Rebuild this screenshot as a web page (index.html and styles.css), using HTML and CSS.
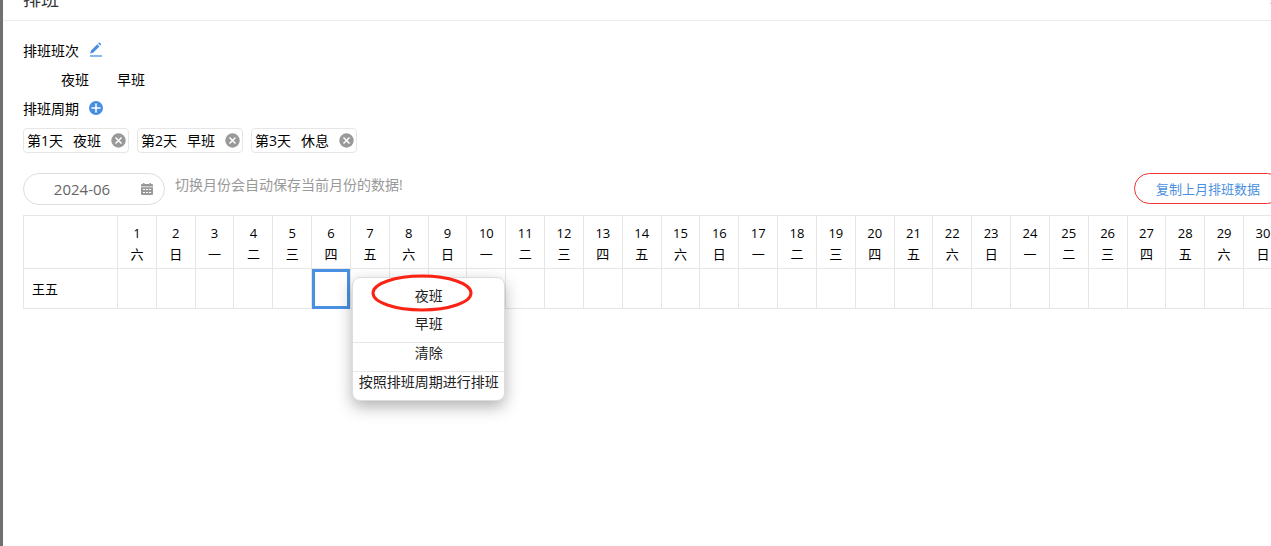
FILE: index.html
```
<!DOCTYPE html>
<html lang="zh-CN">
<head>
	<meta charset="UTF-8">
	<meta name="viewport" content="width=device-width, initial-scale=1.0">
	<title>排班</title>
	<link rel="stylesheet" href="styles.css">
</head>
<body>
<div class="drawer">
	<header class="drawer-header">
		<h1>排班</h1>
		<button class="close" type="button" aria-label="关闭">
			<svg width="14" height="14" viewBox="0 0 14 14"><path d="M2 2l10 10M12 2L2 12" stroke="#888" stroke-width="2"/></svg>
		</button>
	</header>
	<main class="content">
		<div class="line">
			<span>排班班次</span>
			<button class="icon-btn" type="button" aria-label="编辑班次">
				<svg width="14" height="16" viewBox="0 0 14 16"><path d="M1.200 11.500l.8-3 6.300-6.300 2.200 2.200-6.300 6.300zM9.100 1.400l.6-.6q.6-.5 1.200 0l1 1q.5.600 0 1.200l-.6.600z" fill="#4a90e2"/><path d="M1 14h12" stroke="#4a90e2" stroke-width="1.300"/></svg>
			</button>
		</div>
		<div class="line shifts">
			<span>夜班</span>
			<span>早班</span>
		</div>
		<div class="line">
			<span>排班周期</span>
			<button class="icon-btn" type="button" aria-label="添加周期">
				<svg width="14" height="14" viewBox="0 0 14 14"><circle cx="7" cy="7" r="7" fill="#4a90e2"/><path d="M7 2.500v9M2.500 7h9" stroke="#fff" stroke-width="1.500"/></svg>
			</button>
		</div>
		<div class="tags" id="tags"></div>
		<div class="toolbar">
			<div class="month">
				<input type="text" value="2024-06" aria-label="月份">
				<svg width="14" height="14" viewBox="0 0 14 14"><path d="M1 4.500V3q0-1 1-1h10q1 0 1 1v1.500zM3 1h1.500v2H3zM9.500 1H11v2H9.500zM1 5.200h12V12q0 1-1 1H2q-1 0-1-1z" fill="#999"/><path d="M3 7.500h2M6 7.500h2M9 7.500h2M3 10.500h2M6 10.500h2M9 10.500h2" stroke="#fff" stroke-width="1"/></svg>
			</div>
			<span class="hint">切换月份会自动保存当前月份的数据!</span>
			<button class="copy" type="button">复制上月排班数据</button>
		</div>
		<table class="schedule">
			<thead><tr id="days"><th class="name"></th></tr></thead>
			<tbody><tr id="staff"><td class="name">王五</td></tr></tbody>
		</table>
	</main>
</div>

<template id="menu">
	<div class="menu">
		<button type="button">夜班</button>
		<button type="button">早班</button>
		<button type="button" class="split">清除</button>
		<button type="button" class="split">按照排班周期进行排班</button>
		<svg class="mark" width="102" height="38" viewBox="0 0 102 38"><ellipse cx="51" cy="19" rx="49" ry="17" fill="none" stroke="#fa2314" stroke-width="3"/></svg>
	</div>
</template>
<script src="script.js"></script>
</body>
</html>
```
FILE: styles.css
```
* {
  box-sizing: border-box;
}
body {
  margin: 0;
  min-height: 100vh;
  font-family: "Open Sans", "Noto Sans CJK SC", sans-serif;
  font-size: 14px;
  color: #000;
  background-color: #707070;
  overflow-x: hidden;
}
button {
  font-family: inherit;
  padding: 0;
  border: none;
  background: none;
  color: inherit;
  cursor: pointer;
}
svg {
  display: block;
}
.drawer {
  min-height: 100vh;
  margin-left: 3px;
  background-color: #fff;
  overflow: hidden;
}
.drawer-header {
  display: flex;
  justify-content: space-between;
  align-items: flex-end;
  height: 21px;
  margin-right: -12px;
  padding-left: 20px;
  border-bottom: 1px solid #ebebeb;
  overflow: hidden;
}
.drawer-header h1 {
  margin: 0;
  padding-bottom: 9px;
  font-size: 18px;
  font-weight: normal;
  line-height: 24px;
  color: #333;
}
.close {
  padding-bottom: 14px;
}
.content {
  margin-right: -12px;
  padding: 14px 0 20px 20px;
}
.line {
  display: flex;
  align-items: center;
  gap: 10px;
  height: 29px;
}
.shifts {
  gap: 28px;
  padding-left: 38px;
}
.tags {
  display: flex;
  gap: 8px;
  margin-top: 6px;
}
.tag {
  display: flex;
  align-items: center;
  gap: 10px;
  height: 25px;
  padding: 0 2px 0 3px;
  border: 1px solid #e6e6e6;
  border-radius: 4px;
  line-height: 21px;
}
.toolbar {
  display: flex;
  align-items: flex-start;
  gap: 10px;
  margin-top: 20px;
}
.month {
  display: flex;
  align-items: center;
  width: 142px;
  height: 32px;
  padding-right: 10px;
  border: 1px solid #ddd;
  border-radius: 16px;
}
.month input {
  flex: 1;
  min-width: 0;
  padding: 0;
  border: none;
  outline: none;
  background: none;
  font-family: inherit;
  font-size: 15px;
  text-align: center;
  color: #666;
}
.hint {
  line-height: 24px;
  color: #999;
}
.copy {
  height: 31px;
  margin-left: auto;
  padding: 0 22px 0 21px;
  border: 1px solid #f03232;
  border-radius: 16px;
  font-size: 13px;
  color: #4a90e2;
}
.schedule {
  width: 100%;
  margin-top: 10px;
  table-layout: fixed;
  border-collapse: collapse;
  font-size: 13px;
}
.schedule th,
.schedule td {
  padding: 0;
  border: 1px solid #e6e6e6;
}
.schedule th {
  height: 53px;
  padding-top: 3px;
  font-weight: normal;
  line-height: 21px;
}
.schedule td {
  position: relative;
  height: 40px;
}
.schedule .name {
  width: 94px;
  padding-left: 8px;
}
.schedule .active {
  outline: 3px solid #4a90e2;
  outline-offset: -3px;
}
.menu {
  position: absolute;
  top: 8px;
  left: 40px;
  z-index: 2;
  width: 153px;
  padding-top: 8px;
  border: 1px solid #ddd;
  border-radius: 8px;
  background-color: #fff;
  box-shadow: 0 6px 16px rgba(0, 0, 0, 0.3);
}
.menu button {
  display: block;
  width: 100%;
  padding-bottom: 8px;
  font-size: 14px;
  line-height: 20px;
  color: #222;
}
.menu .split {
  border-top: 1px solid #e6e6e6;
}
.mark {
  position: absolute;
  top: -4px;
  left: 18px;
  pointer-events: none;
}
```
FILE: script.js
```
const weekdays = ['日', '一', '二', '三', '四', '五', '六'];
const cycle = ['夜班', '早班', '休息'];
const selectedDay = 6;

const tags = document.getElementById('tags');
cycle.forEach((shift, i) => {
  const tag = document.createElement('div');
  tag.className = 'tag';
  tag.innerHTML = `<span>第${i + 1}天</span><span>${shift}</span>
    <button type="button" aria-label="删除"><svg width="15" height="15" viewBox="0 0 15 15"><circle cx="7.500" cy="7.500" r="7.200" fill="#999"/><path d="M4.500 4.500l6 6M10.500 4.500l-6 6" stroke="#fff" stroke-width="1.500"/></svg></button>`;
  tags.appendChild(tag);
});

const days = document.getElementById('days');
const staff = document.getElementById('staff');
for (let d = 1; d <= 30; d++) {
  const th = document.createElement('th');
  th.innerHTML = `${d}<br>${weekdays[new Date(2024, 5, d).getDay()]}`;
  days.appendChild(th);

  const td = document.createElement('td');
  if (d === selectedDay) {
    td.className = 'active';
    td.appendChild(document.getElementById('menu').content.cloneNode(true));
  }
  staff.appendChild(td);
}
```
